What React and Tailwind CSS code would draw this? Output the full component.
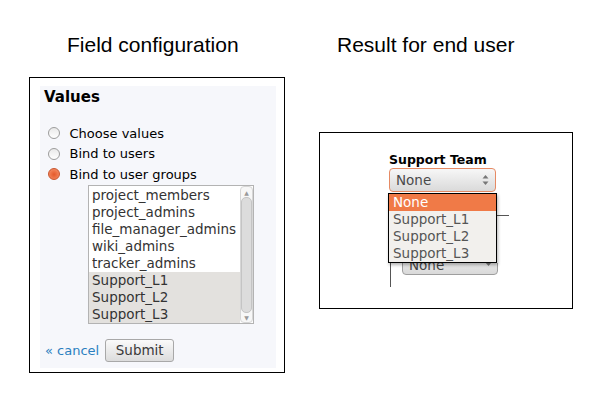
import React from 'react';

const groups = ['project_members', 'project_admins', 'file_manager_admins', 'wiki_admins', 'tracker_admins'];
const selectedGroups = ['Support_L1', 'Support_L2', 'Support_L3'];

const Radio = ({ checked, label }) => (
  <div className="flex items-center h-[20.5px] pl-[4px]">
    {checked ? (
      <span className="w-[12px] h-[12px] rounded-full border border-[#c9542c] bg-[radial-gradient(circle_at_50%_55%,#e45a2c_0%,#ee7447_45%,#f39a78_100%)] shrink-0" />
    ) : (
      <span className="w-[12px] h-[12px] rounded-full border border-[#9c9c9c] bg-gradient-to-b from-[#e9e9e9] to-white shrink-0" />
    )}
    <span className="ml-[9.5px] text-[13px] text-black">{label}</span>
  </div>
);

const FieldConfig = () => (
  <div className="ml-[29px] w-[256px] pt-[33px]">
    <h2 className="text-[21px] leading-[24px] pl-[38px] text-black">Field configuration</h2>
    <div className="mt-[20px] h-[296px] border border-black pt-[8px] pl-[10px] pr-[8px] pb-[4px]">
      <div className="h-full bg-[#f6f7fb] pl-[4px] pt-[2px] font-['DejaVu_Sans',sans-serif]">
        <div className="text-[15px] leading-[18px] font-bold text-black">Values</div>

        <div className="mt-[17px]">
          <Radio label="Choose values" />
          <Radio label="Bind to users" />
          <Radio checked label="Bind to user groups" />
        </div>

        {/* group list */}
        <div className="ml-[44px] w-[166px] h-[139px] border border-[#b3b3b3] bg-white flex">
          <div className="w-[151px] pt-[1px] text-[13.5px] leading-[17px] text-[#333]">
            {groups.map((g) => (
              <div key={g} className="pl-[3px]">{g}</div>
            ))}
            {selectedGroups.map((g) => (
              <div key={g} className="pl-[3px] bg-[#e3e1de]">{g}</div>
            ))}
          </div>
          <div className="w-[13px] flex flex-col items-center bg-[#f7f7f7] border border-[#d6d6d6] rounded-[4px]">
            <span className="text-[6px] leading-[9px] text-[#9a9a9a] mt-[1px]">▲</span>
            <div className="w-[11px] flex-1 rounded-[5px] bg-[#dcdcdc] border border-[#c4c4c4]" />
            <span className="text-[6px] leading-[9px] text-[#9a9a9a]">▼</span>
          </div>
        </div>

        <div className="mt-[15px] flex items-center">
          <a className="ml-[1px] text-[13px] leading-[15px] text-[#2b7fc0]">« cancel</a>
          <button className="ml-[6px] w-[69px] h-[23px] rounded-[3px] border border-[#a8a8a8] bg-gradient-to-b from-[#fafafa] to-[#dcdcdc] text-[13.5px] text-[#3a3a3a]">
            Submit
          </button>
        </div>
      </div>
    </div>
  </div>
);

const SelectArrows = () => (
  <svg width="7" height="12" viewBox="0 0 7 12" className="shrink-0">
    <path d="M3.5 1 L6.5 4.5 L0.5 4.5 Z" fill="#777" />
    <path d="M3.5 11 L6.5 7.5 L0.5 7.5 Z" fill="#777" />
  </svg>
);

const EndUserResult = () => (
  <div className="ml-[34px] w-[254px] pt-[33px]">
    <h2 className="text-[21px] leading-[24px] pl-[18px] text-black">Result for end user</h2>
    <div className="mt-[75px] h-[177px] border border-black relative pl-[69px] pt-[18.5px] font-['DejaVu_Sans',sans-serif]">
      {/* fragments of the form behind the open menu */}
      <div className="absolute left-[70px] top-[129px] w-[1px] h-[25px] bg-[#555]" />
      <div className="absolute left-[176px] top-[82px] w-[13px] h-[1px] bg-[#555]" />
      <div className="absolute left-[82px] top-[130px] w-[96px] h-[13px] overflow-hidden">
        <div className="-mt-[9px] w-[96px] h-[21px] rounded-[4px] border border-[#9e9e9e] bg-gradient-to-b from-[#f4f4f4] to-[#d9d9d9] flex items-center justify-between pl-[6px] pr-[5px]">
          <span className="text-[13.5px] leading-[16px] text-[#444]">None</span>
          <svg width="7" height="5" viewBox="0 0 7 5"><path d="M0.5 0.5 L6.5 0.5 L3.5 4 Z" fill="#777" /></svg>
        </div>
      </div>

      <div className="text-[12.5px] leading-[15px] font-bold text-black">Support Team</div>
      <div className="mt-[1.5px] w-[107px] h-[24px] rounded-[4px] border border-[#e68a64] bg-gradient-to-b from-[#f7f7f7] to-[#dadada] flex items-center justify-between pl-[6px] pr-[6px]">
        <span className="text-[13.5px] text-[#4a4a4a]">None</span>
        <SelectArrows />
      </div>

      {/* open dropdown */}
      <div className="absolute left-[68px] top-[60px] w-[109px] h-[70px] border border-black bg-[#f2f0ed] shadow-[1px_2px_3px_rgba(0,0,0,0.3)] text-[13.5px] leading-[17px]">
        <div className="bg-[#f07a47] text-white pl-[4px] h-[17px]">None</div>
        <div className="pl-[4px] text-[#555]">Support_L1</div>
        <div className="pl-[4px] text-[#555]">Support_L2</div>
        <div className="pl-[4px] text-[#555]">Support_L3</div>
      </div>
    </div>
  </div>
);

export default function App() {
  return (
    <div className="w-[600px] h-[400px] bg-white flex font-['Liberation_Sans',Arial,sans-serif]">
      <FieldConfig />
      <EndUserResult />
    </div>
  );
}
